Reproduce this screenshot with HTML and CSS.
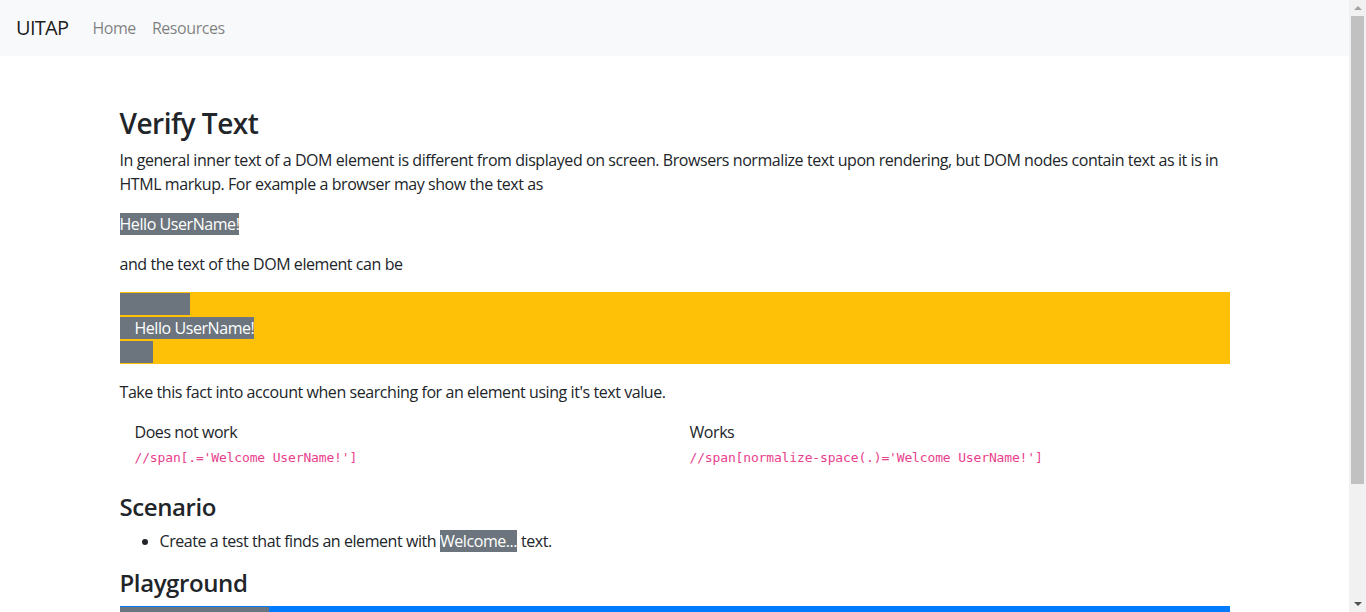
FILE: index.html
```html
<!DOCTYPE html>
<html lang="en">
<head>
<meta charset="utf-8">
<title>Verify Text</title>
<link rel="stylesheet" href="styles.css">
</head>
<body>
<nav class="navbar">
  <a class="brand" href="#">UITAP</a>
  <ul class="nav">
    <li><a href="#">Home</a></li>
    <li><a href="#">Resources</a></li>
  </ul>
</nav>
<section>
  <div class="container">
    <h3>Verify Text</h3>
    <p>In general inner text of a DOM element is different from displayed on screen. Browsers normalize text upon rendering, but DOM nodes contain text as it is in HTML markup. For example a browser may show the text as</p>
    <p><span class="dark">Hello UserName!</span></p>
    <p>and the text of the DOM element can be</p>
    <div class="bg-warning"><span class="dark pre">                   
    Hello UserName!
         </span></div>
    <p>Take this fact into account when searching for an element using it's text value.</p>
    <div class="cols">
      <div class="col">
        <div>Does not work</div>
        <div><code>//span[.='Welcome UserName!']</code></div>
      </div>
      <div class="col">
        <div>Works</div>
        <div><code>//span[normalize-space(.)='Welcome UserName!']</code></div>
      </div>
    </div>
    <h4>Scenario</h4>
    <ul>
      <li>Create a test that finds an element with <span class="dark">Welcome...</span> text.</li>
    </ul>
    <h4>Playground</h4>
    <div class="bg-primary"><span class="dark pre">Welcome UserName!</span></div>
    <p>&nbsp;</p>
  </div>
</section>
<div class="scrollbar" aria-hidden="true">
  <div class="sb-arrow sb-up"></div>
  <div class="sb-thumb"></div>
  <div class="sb-arrow sb-down"></div>
</div>
</body>
</html>
```
FILE: styles.css
```css
html, body {
  margin: 0;
  padding: 0;
}
body {
  margin-right: 17px;
  font-family: "Open Sans", "Noto Sans", sans-serif;
  font-size: 16px;
  line-height: 1.5;
  letter-spacing: -0.43px;
  color: #212529;
  background: #fff;
}
.navbar {
  display: flex;
  align-items: center;
  height: 56px;
  box-sizing: border-box;
  padding: 8px 16px;
  background: #f8f9fa;
}
.brand {
  font-size: 20px;
  line-height: 30px;
  padding: 5px 0;
  margin-right: 16px;
  color: rgba(0, 0, 0, 0.9);
  text-decoration: none;
  letter-spacing: -0.7px;
}
.nav {
  display: flex;
  list-style: none;
  margin: 0;
  padding: 0;
}
.nav a {
  display: block;
  padding: 8px;
  color: rgba(0, 0, 0, 0.5);
  text-decoration: none;
}
.container {
  width: 1110px;
  margin: 0 auto;
  padding: 51px 15px 0;
}
h3, h4 {
  margin: 0 0 8px;
  font-weight: 600;
  line-height: 1.2;
}
h3 { font-size: 28px; letter-spacing: -0.5px; }
h4 { font-size: 24px; letter-spacing: -0.4px; }
h3 + p { margin-top: -1px; }
p {
  margin: 0 0 16px;
}
.dark {
  background: #6c757d;
  color: #fff;
}
.pre {
  white-space: pre;
}
.bg-warning {
  background: #ffc107;
  margin-bottom: 16px;
}
.bg-primary {
  background: #007bff;
}
.cols {
  display: grid;
  grid-template-columns: 1fr 1fr;
  margin-bottom: 25px;
}
.col {
  padding-left: 15px;
}
code {
  font-family: "DejaVu Sans Mono", "Liberation Mono", monospace;
  font-size: 13px;
  letter-spacing: -0.15px;
  color: #e83e8c;
}
ul {
  margin: 0 0 16px;
  padding-left: 40px;
}
.scrollbar {
  position: fixed;
  top: 0;
  right: 0;
  width: 17px;
  height: 100vh;
  background: #f1f1f1;
  display: flex;
  flex-direction: column;
  align-items: center;
}
.sb-arrow {
  width: 0;
  height: 0;
  border-left: 4px solid transparent;
  border-right: 4px solid transparent;
}
.sb-up {
  margin: 6px 0 6px;
  border-bottom: 4px solid #a3a3a3;
}
.sb-thumb {
  width: 13px;
  height: 468px;
  background: #c1c1c1;
}
.sb-down {
  margin-top: auto;
  margin-bottom: 6px;
  border-top: 4px solid #505050;
}
```
